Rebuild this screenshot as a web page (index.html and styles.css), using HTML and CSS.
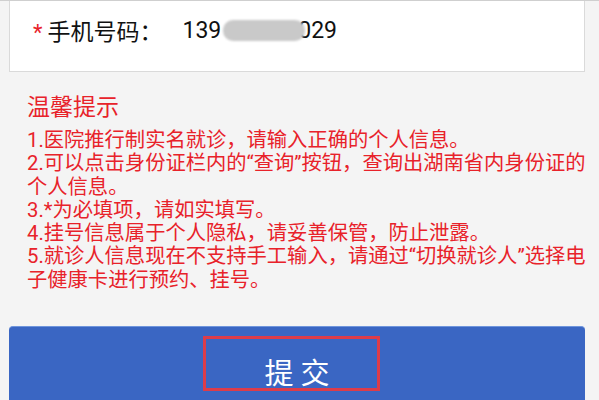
FILE: index.html
```html
<!DOCTYPE html>
<html lang="zh-CN">
<head>
<meta charset="utf-8">
<title>挂号信息</title>
<link rel="stylesheet" href="styles.css">
</head>
<body>
  <div class="page">
    <div class="card">
      <div class="field">
        <span class="req">*</span>
        <span class="label">手机号码：</span>
        <span class="value">139<span class="mask"></span>029</span>
      </div>
    </div>

    <div class="tips">
      <h3 class="tips-title">温馨提示</h3>
      <p class="tips-body">1.医院推行制实名就诊，请输入正确的个人信息。<br>2.可以点击身份证栏内的“查询”按钮，查询出湖南省内身份证的个人信息。<br>3.*为必填项，请如实填写。<br>4.挂号信息属于个人隐私，请妥善保管，防止泄露。<br>5.就诊人信息现在不支持手工输入，请通过“切换就诊人”选择电子健康卡进行预约、挂号。</p>
    </div>

    <button class="submit" type="button">
      <span class="submit-text">提 交</span>
      <span class="highlight"></span>
    </button>
  </div>
</body>
</html>
```

FILE: styles.css
```css
html, body {
  margin: 0;
  padding: 0;
  background: #f4f4f4;
  font-family: Roboto, "Noto Sans CJK SC", sans-serif;
}

.page {
  height: 400px;
  overflow: hidden;
  border-top: 1px solid #cfcfcf;
}

.card {
  margin: 0 14px 0 9px;
  height: 70px;
  background: #fff;
  border: 1px solid #dadada;
  border-top: none;
  display: flex;
  align-items: center;
}

.field {
  display: flex;
  align-items: center;
  padding: 0 0 12px 23px;
  font-size: 23px;
  color: #111;
}

.req {
  color: #e8222a;
  font-size: 22px;
  margin-right: 5px;
  position: relative;
  top: 2px;
}

.label {
  margin-right: 20px;
}

.value {
  display: inline-flex;
  align-items: center;
}

.mask {
  position: relative;
  display: inline-block;
  width: 82px;
  height: 21px;
  margin: 0 -7px 0 2px;
  border-radius: 10px;
  background: #c9c9c9;
  filter: blur(1px);
}

.tips {
  margin: 21px 9px 0 27px;
  color: #e8222a;
}

.tips-title {
  margin: 0 0 6px;
  font-size: 23px;
  font-weight: normal;
  line-height: 30px;
}

.tips-body {
  margin: 0;
  font-size: 20.3px;
  line-height: 23.3px;
}

.submit {
  position: relative;
  display: block;
  width: 576px;
  height: 90px;
  margin: 34px 0 0 9px;
  padding: 4px 0 0;
  border: none;
  border-top: 1px solid #6f95dc;
  border-radius: 4px;
  background: #3a66c3;
  color: #fff;
  font-family: inherit;
  font-size: 29px;
  text-align: center;
}

.submit-text {
  display: block;
  line-height: 56px;
}

/* emphasis frame around the label */
.highlight {
  position: absolute;
  left: 194px;
  top: 9px;
  width: 171px;
  height: 49px;
  border: 3px solid #dc3c4a;
}
```
